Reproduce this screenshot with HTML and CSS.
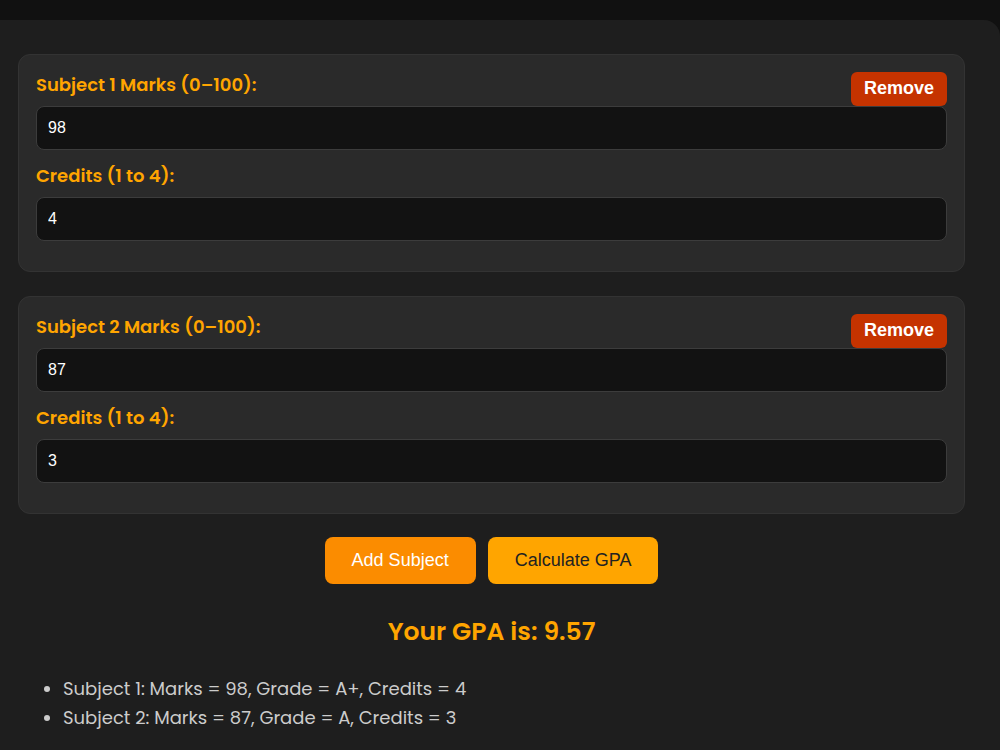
FILE: index.html
```html
<!DOCTYPE html>
<html lang="en">
<head>
    <meta charset="UTF-8">
    <meta name="viewport" content="width=device-width, initial-scale=1.0">
    <title>GPA Calculator</title>
    <link rel="stylesheet" href="styles.css">
</head>
<body>
    <div class="container">
        <div id="subjects" class="subjects">
            <div class="subject">
                <button class="remove-btn">Remove</button>
                <label>Subject 1 Marks (0–100):</label>
                <input type="number" value="98">
                <label>Credits (1 to 4):</label>
                <input type="number" value="4">
            </div>
            <div class="subject">
                <button class="remove-btn">Remove</button>
                <label>Subject 2 Marks (0–100):</label>
                <input type="number" value="87">
                <label>Credits (1 to 4):</label>
                <input type="number" value="3">
            </div>
        </div>

        <div class="actions">
            <button class="add-btn">Add Subject</button>
            <button class="calc-btn">Calculate GPA</button>
        </div>

        <h3 class="result">Your GPA is: 9.57</h3>
        <ul class="breakdown">
            <li>Subject 1: Marks = 98, Grade = A+, Credits = 4</li>
            <li>Subject 2: Marks = 87, Grade = A, Credits = 3</li>
        </ul>
    </div>
</body>
</html>
```

FILE: styles.css
```css
body {
    margin: 0;
    background-color: #111;
    font-family: "Poppins", "Inter", "Noto Sans", sans-serif;
    color: #ddd;
}
.container {
    margin-top: 20px;
    background-color: #1e1e1e;
    padding: 34px 35px 40px 18px;
    border-top-right-radius: 16px;
    min-height: 700px;
}
.subjects {
    display: flex;
    flex-direction: column;
    gap: 24px;
}
.subject {
    background-color: #2a2a2a;
    border: 1px solid #333;
    border-radius: 12px;
    padding: 17px;
}
.subject label {
    display: block;
    color: #ffa500;
    font-weight: 600;
    font-size: 18px;
    line-height: 26px;
    margin-bottom: 8px;
}
.subject input {
    display: block;
    width: 100%;
    box-sizing: border-box;
    padding: 12px 11px;
    margin-bottom: 13px;
    background-color: #121212;
    border: 1px solid #3c3c3c;
    border-radius: 8px;
    color: #fff;
    font-family: "Liberation Sans", Arial, sans-serif;
    font-size: 16px;
    line-height: 18px;
}
.subject input::-webkit-inner-spin-button,
.subject input::-webkit-outer-spin-button {
    -webkit-appearance: none;
    margin: 0;
}
.remove-btn {
    float: right;
    background-color: #c53300;
    color: #fff;
    border: none;
    border-radius: 6px;
    padding: 6px 13px 7px;
    font-family: "Liberation Sans", Arial, sans-serif;
    font-weight: bold;
    font-size: 18px;
    line-height: 21px;
    cursor: pointer;
}
.actions {
    display: flex;
    justify-content: center;
    gap: 12px;
    margin-top: 23px;
}
.actions button {
    border: none;
    border-radius: 8px;
    padding: 13px 27px;
    font-family: "Liberation Sans", Arial, sans-serif;
    font-size: 18px;
    line-height: 21px;
    cursor: pointer;
}
.add-btn {
    background-color: #fb8c00;
    color: #fff;
}
.calc-btn {
    background-color: #ffa500;
    color: #222;
}
.result {
    text-align: center;
    color: #ffa500;
    font-size: 25px;
    font-weight: 600;
    line-height: 36px;
    margin: 30px 0 0;
}
.breakdown {
    margin: 24px 0 0;
    padding-left: 45px;
    color: #ccc;
    font-size: 18px;
    line-height: 29px;
}
```
